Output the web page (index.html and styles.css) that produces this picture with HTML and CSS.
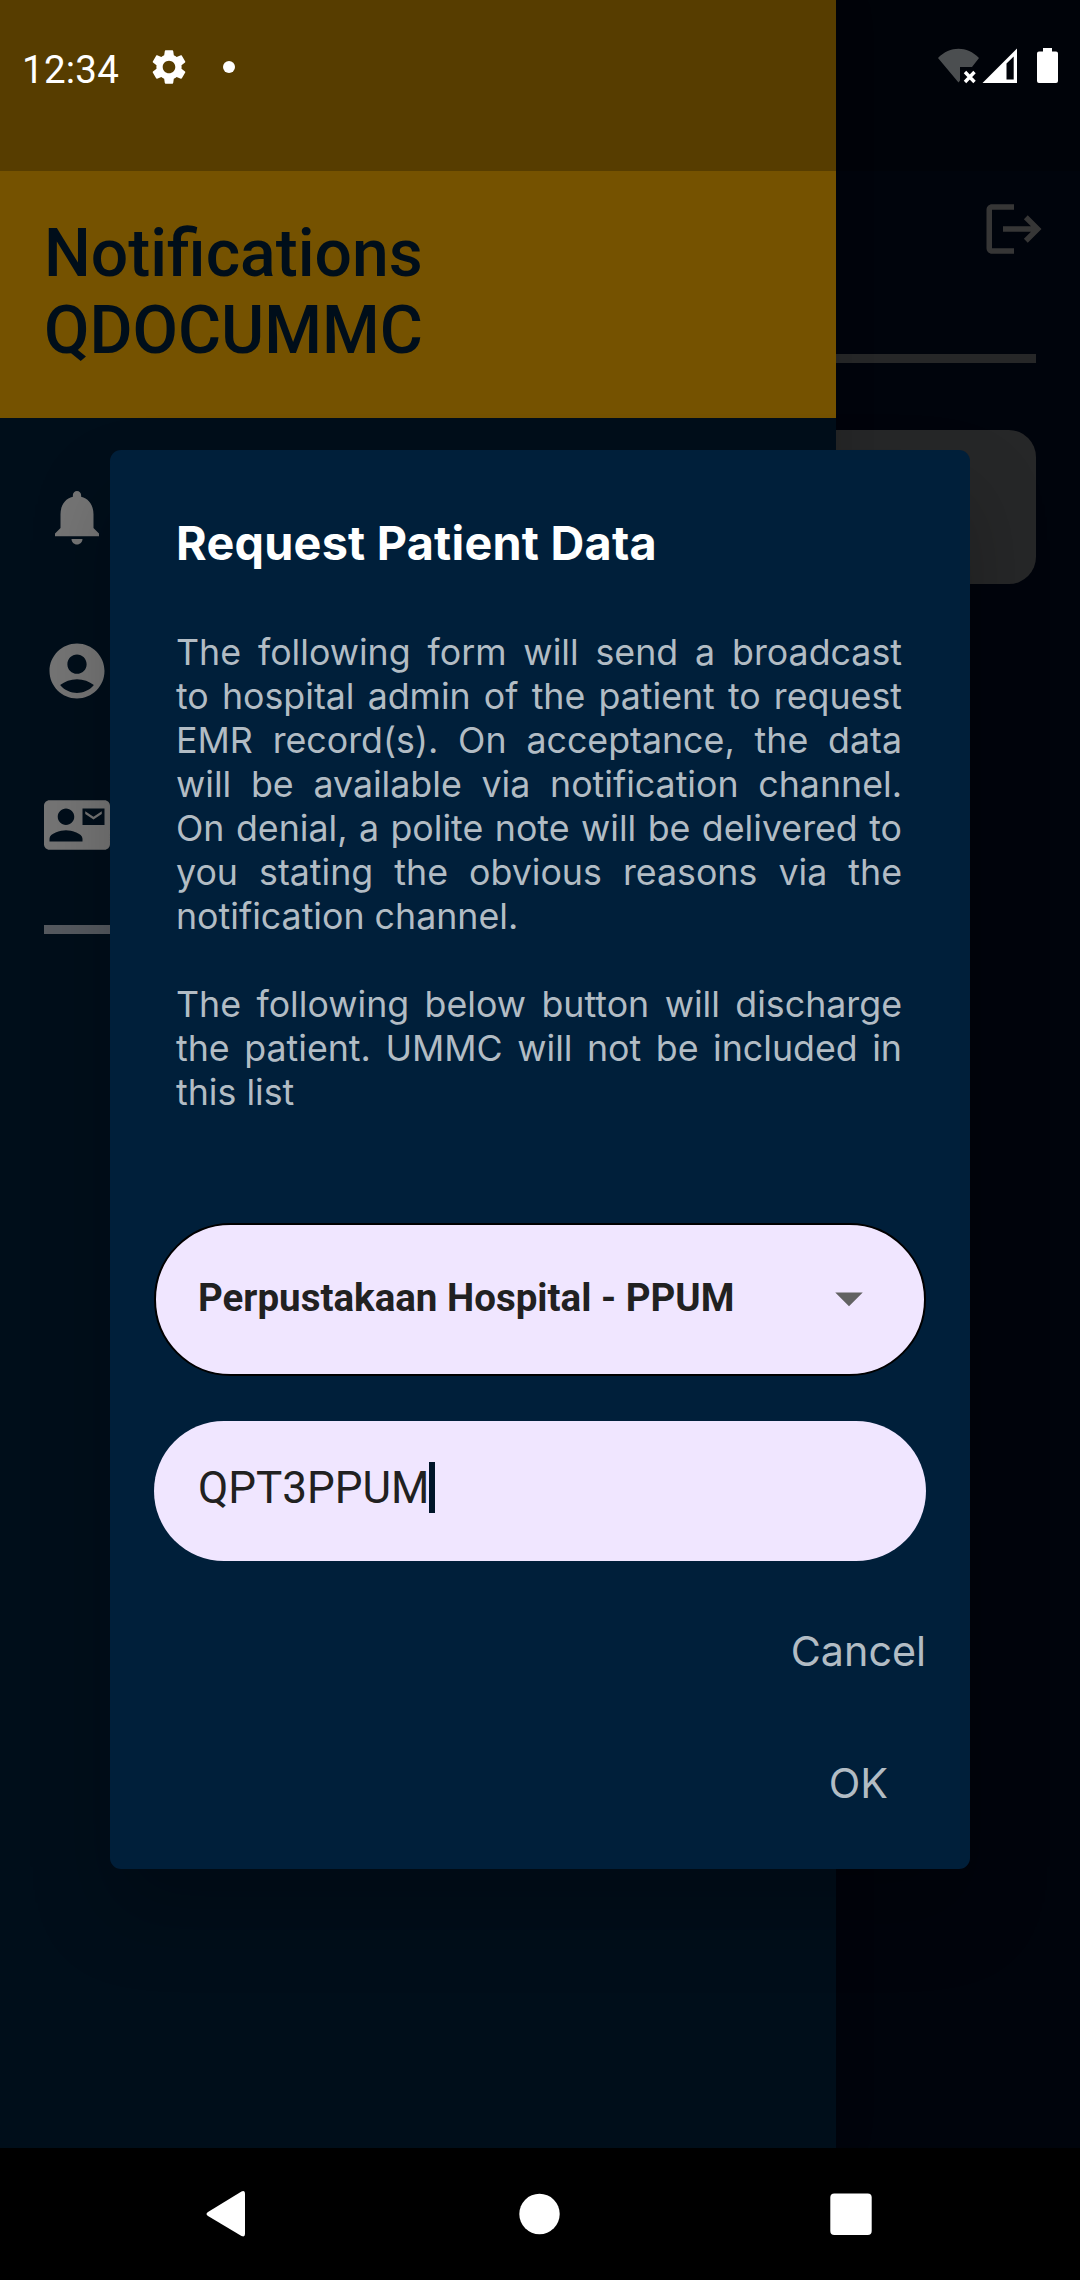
FILE: index.html
```html
<!DOCTYPE html>
<html lang="en">
<head>
<meta charset="utf-8">
<title>Request Patient Data</title>
<link rel="stylesheet" href="styles.css">
</head>
<body>
<div class="screen">
  <div class="app">
    <aside class="drawer">
      <header class="drawer-header">
        <h1 class="drawer-title">Notifications QDOCUMMC</h1>
      </header>
      <nav class="drawer-menu">
        <svg class="menu-icon" viewBox="0 0 24 24"><path d="M12 22c1.1 0 2-.9 2-2h-4c0 1.1.89 2 2 2zm6-6v-5c0-3.07-1.64-5.64-4.5-6.32V4c0-.83-.67-1.5-1.5-1.5s-1.5.67-1.5 1.5v.68C7.63 5.36 6 7.92 6 11v5l-2 2v1h16v-1l-2-2z"/></svg>
        <svg class="menu-icon" viewBox="0 0 24 24"><path d="M12 2C6.48 2 2 6.48 2 12s4.48 10 10 10 10-4.48 10-10S17.52 2 12 2zm0 4c1.93 0 3.5 1.57 3.5 3.5S13.93 13 12 13s-3.5-1.57-3.5-3.5S10.07 6 12 6zm0 14c-2.03 0-4.43-.82-6.14-2.88C7.55 15.8 9.68 15 12 15s4.45.8 6.14 2.12C16.43 19.18 14.03 20 12 20z"/></svg>
        <svg class="menu-icon" viewBox="0 0 24 24"><path d="M21 8V7l-3 2-3-2v1l3 2 3-2zm1-5H2C.9 3 0 3.9 0 5v14c0 1.1.9 2 2 2h20c1.1 0 1.99-.9 1.99-2L24 5c0-1.1-.9-2-2-2zM8 6c1.66 0 3 1.34 3 3s-1.34 3-3 3-3-1.34-3-3 1.34-3 3-3zm6 12H2v-1c0-2 4-3.1 6-3.1s6 1.1 6 3.1v1zm8-6h-8V6h8v6z"/></svg>
        <div class="menu-divider"></div>
      </nav>
    </aside>
    <main class="page">
      <svg class="logout" viewBox="0 0 24 24"><path d="M17 7l-1.41 1.41L18.17 11H8v2h10.17l-2.58 2.58L17 17l5-5zM4 5h8V3H4c-1.1 0-2 .9-2 2v14c0 1.1.9 2 2 2h8v-2H4V5z"/></svg>
      <div class="page-divider"></div>
      <div class="page-card"></div>
    </main>
  </div>

  <section class="dialog">
    <h2 class="dialog-title">Request Patient Data</h2>
    <p class="dialog-text">The following form will send a broadcast to&nbsp;hospital admin of the patient to request EMR record(s). On acceptance, the data will be available via notification channel. On denial, a polite note will be delivered to you stating the obvious reasons via the notification channel.</p>
    <p class="dialog-text">The following below button will discharge the patient. UMMC will not be included in this list</p>
    <div class="select">
      <span>Perpustakaan Hospital - PPUM</span>
      <svg class="caret" viewBox="0 0 24 24"><path d="M7 10l5 5 5-5z"/></svg>
    </div>
    <div class="input"><span>QPT3PPUM</span><i class="cursor"></i></div>
    <div class="actions">
      <span class="action">Cancel</span>
      <span class="action action-ok">OK</span>
    </div>
  </section>

  <div class="status">
    <span class="clock">12:34</span>
    <svg class="gear" viewBox="0 0 24 24"><path d="M19.14 12.94c.04-.3.06-.61.06-.94 0-.32-.02-.64-.07-.94l2.03-1.58c.18-.14.23-.41.12-.61l-1.92-3.32c-.12-.22-.37-.29-.59-.22l-2.39.96c-.5-.38-1.03-.7-1.62-.94l-.36-2.54c-.04-.24-.24-.41-.48-.41h-3.84c-.24 0-.43.17-.47.41l-.36 2.54c-.59.24-1.13.57-1.62.94l-2.39-.96c-.22-.08-.47 0-.59.22L2.74 8.87c-.12.21-.08.47.12.61l2.03 1.58c-.05.3-.09.63-.09.94s.02.64.07.94l-2.03 1.58c-.18.14-.23.41-.12.61l1.92 3.32c.12.22.37.29.59.22l2.39-.96c.5.38 1.03.7 1.62.94l.36 2.54c.05.24.24.41.48.41h3.84c.24 0 .44-.17.47-.41l.36-2.54c.59-.24 1.13-.56 1.62-.94l2.39.96c.22.08.47 0 .59-.22l1.92-3.32c.12-.22.07-.47-.12-.61l-2.01-1.58zM12 15.6c-1.98 0-3.6-1.62-3.6-3.6s1.62-3.6 3.6-3.6 3.6 1.62 3.6 3.6-1.62 3.6-3.6 3.6z"/></svg>
    <i class="dot"></i>
    <svg class="signals" viewBox="0 0 122 38">
      <path fill="#4b4e50" d="M0 10C12-2.200 29-2.200 41 10L34 19H22v13.500l-1.500 2z"/>
      <path stroke="#fff" stroke-width="3.400" d="M27 24l9.500 10M36.500 24l-9.500 10"/>
      <path fill="#fff" fill-rule="evenodd" d="M79 .5v34.500H44.500zM75.700 8.500l-7.200 7V31.500h7.200z"/>
      <path fill="#fff" d="M105 0h9v3.500h4q2 0 2 2v27.500q0 2-2 2h-17q-2 0-2-2V5.500q0-2 2-2h4z"/>
    </svg>
  </div>

  <footer class="navbar">
    <svg viewBox="0 0 48 48"><path d="M38.500 1.500Q42 0 42 4v40q0 3.500-3.500 2L5 26q-3-2 0-4z"/></svg>
    <svg viewBox="0 0 48 48"><circle cx="24.500" cy="24" r="20.200"/></svg>
    <svg viewBox="0 0 48 48"><rect x="3.300" y="3.500" width="41.400" height="41.400" rx="4"/></svg>
  </footer>
</div>
</body>
</html>
```
FILE: styles.css
```css
* { box-sizing: border-box; margin: 0; }
body { background: #000; }
.screen {
  position: relative;
  width: 1080px;
  height: 2280px;
  overflow: hidden;
  display: flex;
  flex-direction: column;
  font-family: Roboto, sans-serif;
}
.app { display: flex; height: 2148px; flex: none; }
.drawer {
  width: 836px;
  background: #000e1a;
  box-shadow: 0 0 40px rgba(0, 0, 0, .12);
  position: relative;
}
.drawer-header {
  height: 418px;
  padding: 214.500px 44px 0;
  background: #755200;
}
.drawer-title {
  width: 500px;
  font-size: 66px;
  line-height: 77px;
  font-weight: 500;
  color: #000e1a;
}
.drawer-menu { padding: 66px 44px 0; display: flex; flex-direction: column; gap: 88px; }
.menu-icon { width: 66px; height: 66px; fill: #757575; }
.menu-divider { height: 9px; margin-top: -21px; background: #55595f; }
.page {
  flex: 1;
  background: #00040c;
  padding: 196px 44px 0 0;
  display: flex;
  flex-direction: column;
}
.logout { width: 66px; height: 66px; margin-right: -11px; align-self: flex-end; fill: #363636; }
.page-divider { height: 8.500px; margin-top: 92px; background: #262728; }
.page-card { height: 154px; margin-top: 67.500px; background: #262728; border-radius: 0 27px 27px 0; }

.dialog {
  position: absolute;
  left: 110px;
  top: 450px;
  width: 860px;
  height: 1419px;
  padding: 65px 44px 0;
  border-radius: 11px;
  background: #001f3a;
  box-shadow: 0 44px 80px rgba(0, 0, 0, .22);
  font-family: Inter, sans-serif;
}
.dialog-title {
  padding: 0 22px;
  font-size: 46.750px;
  line-height: 56px;
  font-weight: 700;
  letter-spacing: .25px;
  color: #fff;
}
.dialog-text {
  margin: 0 24px 44px 22px;
  font-size: 35.750px;
  line-height: 44px;
  text-align: justify;
  color: #b2bcc4;
}
.dialog-title + .dialog-text { margin-top: 59px; }
.select {
  display: flex;
  align-items: center;
  justify-content: space-between;
  height: 153px;
  margin-top: 109px;
  padding: 0 42px 4px;
  border: 2px solid #000;
  border-radius: 77px;
  background: #f0e6ff;
  font: 700 38.500px Roboto, sans-serif;
  color: #212121;
}
.caret { width: 66px; height: 66px; fill: #626262; }
.input {
  display: flex;
  align-items: center;
  height: 140px;
  margin-top: 44.500px;
  padding: 0 44px 6px;
  border-radius: 70px;
  background: #f0e6ff;
  font: 400 44px Roboto, sans-serif;
  color: #212121;
}
.cursor { width: 6px; height: 51px; background: #001529; }
.actions { display: flex; flex-direction: column; align-items: flex-end; padding-top: 24px; }
.action { height: 132px; line-height: 132px; font-size: 41.250px; color: #b2bcc4; }
.action-ok { padding-right: 38px; }

.status {
  position: absolute;
  inset: 0 0 auto;
  height: 171px;
  padding: 0 20px 37px 22px;
  display: flex;
  align-items: center;
  background: rgba(0, 0, 0, .25);
  color: #fff;
}
.clock { width: 125.500px; font-size: 38.500px; letter-spacing: .25px; padding-top: 5px; }
.gear { width: 42px; height: 42px; fill: #fff; }
.dot { width: 12px; height: 12px; margin-left: 33.500px; border-radius: 50%; background: #fff; }
.signals { width: 122px; height: 38px; margin-left: auto; fill: none; }

.navbar {
  flex: 1;
  display: flex;
  align-items: center;
  justify-content: space-between;
  padding: 0 205px 0 203px;
  background: #000;
}
.navbar svg { width: 48px; height: 48px; fill: #fff; }
```
